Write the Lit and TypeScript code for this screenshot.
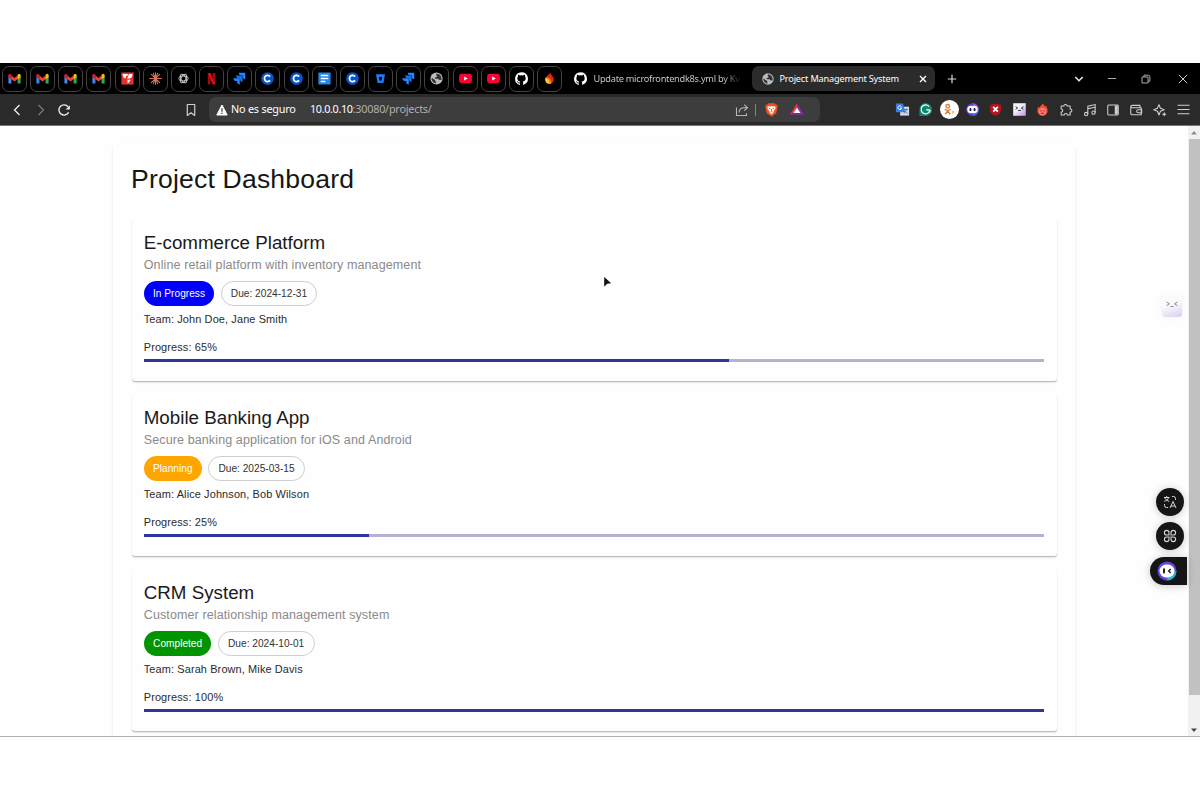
import { LitElement, html, css, svg, SVGTemplateResult } from "lit";
import { customElement, property } from "lit/decorators.js";

type Glyph = SVGTemplateResult;

const gmail: Glyph = svg`<path d="M1.500 4.500V13.200h3.200V7z" fill="#4285f4"/><path d="M11.300 7v6.200h3.200V4.500z" fill="#34a853"/><path d="M4.400 4.600L8 7.400l3.600-2.800V8.400L8 11.200 4.400 8.400z" fill="#ea4335"/><path d="M1.500 4.600a1.600 1.600 0 0 1 2.600-1.200l.6.500v5L1.500 6.700z" fill="#c5221f"/><path d="M11.300 3.900l.6-.5a1.600 1.600 0 0 1 2.600 1.200v2.100l-3.200 2.200z" fill="#fbbc04"/>`;
const flag: Glyph = svg`<rect x="1.500" y="1.500" width="13" height="13" fill="#e5322d"/><path d="M2.600 3.200h6L7.800 5.400H6.600l-.8 2.700C4 7.500 2.900 5.800 2.600 3.200zM9.600 3.200h3.800c-.2 2.500-1.300 4.300-3.300 4.900H7.600zM7.800 9.200h3.600L8.300 13.600z" fill="#fff"/>`;
const claude: Glyph = svg`<g stroke="#d9775a" stroke-width="1.100" stroke-linecap="round"><path d="M8 1.800v12.400M1.800 8h12.400M3.600 3.600l8.800 8.800M12.400 3.600l-8.800 8.800M5.600 2.300l4.800 11.400M10.400 2.300L5.600 13.700"/></g>`;
const gpt: Glyph = svg`<g fill="none" stroke="#c9c9c9" stroke-width="1"><ellipse cx="8" cy="8" rx="5" ry="2.600"/><ellipse cx="8" cy="8" rx="5" ry="2.600" transform="rotate(60 8 8)"/><ellipse cx="8" cy="8" rx="5" ry="2.600" transform="rotate(120 8 8)"/></g>`;
const netflix: Glyph = svg`<path d="M4 2h2.800v12L4 14.400zM9.200 2H12v12.400L9.200 14z" fill="#a8070f"/><path d="M4 2h2.800L12 14.400 9.200 14z" fill="#e50914"/>`;
const jira: Glyph = svg`<path d="M7.200 1.800h6.900v6.900c-1.700 0-2.800-1.200-2.800-2.800V4.600h-1.400c-1.500 0-2.700-1.200-2.700-2.800z" fill="#2684ff"/><path d="M4.300 4.800h6.900v6.900c-1.700 0-2.800-1.200-2.800-2.800V7.600H7c-1.500 0-2.700-1.200-2.700-2.800z" fill="#1272e6"/><path d="M1.400 7.800h6.900v6.700c-1.700 0-2.800-1.100-2.800-2.700v-1.200H4.100c-1.500 0-2.700-1.200-2.700-2.800z" fill="#2684ff"/>`;
const cMark: Glyph = svg`<circle cx="8" cy="8" r="6.800" fill="#0a53c4"/><path d="M10.700 6A3.300 3.300 0 1 0 10.700 10" fill="none" stroke="#fff" stroke-width="1.900"/>`;
const docs: Glyph = svg`<rect x="1.500" y="1.500" width="13" height="13" rx="1" fill="#2585e8"/><path d="M4 4.800h8M4 8h8M4 11.200h5" stroke="#fff" stroke-width="1.500"/>`;
const bucket: Glyph = svg`<path fill-rule="evenodd" d="M3.200 3.500h9.600l-1.600 9.200H4.800zM6.300 6.400l.5 3.600h2.400l.5-3.600z" fill="#1b7cf2"/>`;
const globe: Glyph = svg`<circle cx="8" cy="8" r="6.500" fill="#b9bdc2"/><path d="M8.500 2.600c-1 .8-1.400 1.600-.3 2.300 1.200.6 0 1.800-1.200 1.800s-1 1.500.2 1.500h2c1.200 0 1 1.400 2.200 1.400h1.700a5.400 5.400 0 0 0-4.600-7zM2.700 7.300c1.300.3 1.600 1.400 2.800 1.700 1.200.2.7 1.500 1.800 1.900v2.400a5.400 5.400 0 0 1-4.600-6z" fill="#303236"/>`;
const youtube: Glyph = svg`<rect x="1.200" y="3" width="13.600" height="10" rx="2.600" fill="#ff0033"/><path d="M6.500 5.800L10.400 8l-3.900 2.200z" fill="#fff"/>`;
const github: Glyph = svg`<path d="M8 1.2a7 7 0 0 0-2.2 13.6c.35.06.48-.15.48-.34v-1.3c-1.95.43-2.36-.83-2.36-.83-.32-.8-.78-1.03-.78-1.03-.64-.43.05-.42.05-.42.7.05 1.07.72 1.07.72.63 1.07 1.64.76 2.04.58.06-.45.25-.76.45-.94-1.56-.18-3.2-.78-3.2-3.46 0-.77.28-1.4.73-1.88-.07-.18-.32-.9.07-1.86 0 0 .59-.19 1.93.72a6.7 6.7 0 0 1 3.5 0c1.34-.9 1.92-.72 1.92-.72.39.97.15 1.68.07 1.86.45.49.72 1.11.72 1.88 0 2.7-1.64 3.28-3.2 3.46.25.21.47.64.47 1.3v1.92c0 .19.13.4.49.33A7 7 0 0 0 8 1.2z" fill="#fff"/>`;
const flame: Glyph = svg`<path d="M8.800 1.800c.8 2.600 3.800 4 3.800 7A4.700 4.700 0 0 1 8 13.800a4.700 4.700 0 0 1-4.700-4.900C3.300 6 7 4.500 8.800 1.800z" fill="#e2231a"/><path d="M3.600 7.300C6.500 7.500 8 10 8.600 13.700A4.800 4.800 0 0 1 3.600 7.300z" fill="#ffc928"/><path d="M6.500 6.800c2.500 1 3.700 3.500 3.400 6.500l-1.500.5C8.300 11 7 8.500 4.800 7.300z" fill="#f58220"/>`;

const translate: Glyph = svg`<rect x="5.500" y="5" width="9.500" height="9.500" fill="#d4dae2"/><path d="M9.500 8h4.500M12 7v1c0 2-1.200 3.300-2.500 4M10.500 9c.6 1.600 1.600 2.400 3 3" stroke="#5b6a7c" stroke-width=".9" fill="none"/><path d="M1 1.500h7.500l2.500 9.500H1z" fill="#347fe8"/><path d="M6.800 4.900a2 2 0 1 0 .3 1.600H5.300" fill="none" stroke="#fff"/>`;
const grammarly: Glyph = svg`<path d="M8 1a7 7 0 0 1 7 7 7 7 0 0 1-7 7H1.500V8A6.800 6.800 0 0 1 8 1z" fill="#11866f"/><path d="M11.700 4.900A4.700 4.700 0 1 0 12.700 8.500" fill="none" stroke="#fff" stroke-width="1.300"/><path d="M8.800 8.500h3.900M12.600 8.500v2.800" fill="none" stroke="#fff" stroke-width="1.300"/>`;
const people: Glyph = svg`<circle cx="8" cy="8" r="8" fill="#fff"/><g fill="none" stroke="#e27a22" stroke-width="1.100"><circle cx="6.500" cy="5.300" r="1.500"/><path d="M4 7.800c1.500 1.200 3.500 1.200 5 0M4.400 12l2.100-2.700 2.100 2.700"/></g><path d="M10 8.700l2.800 1.500L10 11.800z" fill="#f4c58a"/>`;
const bot: Glyph = svg`<circle cx="8" cy="8" r="6.800" fill="#5740d6"/><path d="M8 1.200A6.800 6.800 0 0 1 14.800 8h-3z" fill="#b04fe0"/><path d="M14.800 8A6.800 6.800 0 0 1 8 14.800L9 12z" fill="#3a6cf0"/><rect x="2.400" y="4" width="11.200" height="8" rx="4" fill="#fff"/><path d="M5.800 7.500v1.200M10.200 7.500v1.200" stroke="#15163a" stroke-width="2" stroke-linecap="round"/>`;
const shieldX: Glyph = svg`<path d="M8 1.500l6 1.800v4.700c0 3.400-2.400 5.400-6 6.700-3.600-1.300-6-3.300-6-6.700V3.300z" fill="#b7131f"/><path d="M5.500 5.300l5 5M10.500 5.300l-5 5" stroke="#fff" stroke-width="1.900"/>`;
const catFace: Glyph = svg`<defs><linearGradient id="cf" x1="0" y1="0" x2="1" y2="1"><stop offset=".4" stop-color="#f4f2fa"/><stop offset="1" stop-color="#b990e4"/></linearGradient></defs><rect x="1.300" y="1.300" width="13.400" height="13.400" fill="url(#cf)"/><path d="M3.800 5l2.200 1.400-2.200 1.400M12.200 5L10 6.400l2.200 1.400M6.500 9h3" stroke="#33333c" fill="none"/>`;
const fireFace: Glyph = svg`<path d="M8.500 1.200c.4 1.800 1.700 2.400 2.400 3.700l1-1.100c.2 1.800 1.600 3 1.600 5.500A5.500 5.500 0 0 1 8 14.800a5.500 5.500 0 0 1-5.500-5.500c0-2 .7-3 1-4.500l1.600 1.300C5.200 4 7.500 3 8.500 1.200z" fill="#f0532f"/><circle cx="8" cy="10.200" r="3.900" fill="#ff7d78"/><path d="M6.300 8.700v1.500M9.700 8.700v1.500M6.300 12h3.400" stroke="#8d1524" stroke-width="1"/>`;
const puzzle: Glyph = svg`<path d="M2.500 3.500h3.200c-.5-2.500 4-2.500 3.500 0h3.500v3.300c2.700-.5 2.700 4 0 3.500v3.400H9.500c.3-2.400-3.800-2.400-3.500 0H2.500v-3.400c2.300.3 2.300-3.800 0-3.500z" fill="none" stroke="#d0d0d0" stroke-width="1.200" stroke-linejoin="round"/>`;
const music: Glyph = svg`<g fill="none" stroke="#d0d0d0" stroke-width="1.200"><circle cx="3.600" cy="12.600" r="1.900"/><circle cx="12" cy="11" r="1.900"/><path d="M5.500 12.600V3.600l8.400-1.800V11M5.500 6.600l8.400-1.800"/></g>`;
const panel: Glyph = svg`<rect x="2" y="2.300" width="12" height="11.400" rx="1" fill="none" stroke="#d0d0d0" stroke-width="1.200"/><path d="M10 3h3.500v10H10z" fill="#d0d0d0"/>`;
const wallet: Glyph = svg`<g fill="none" stroke="#d0d0d0" stroke-width="1.200"><path d="M12.500 5V2.700H3.500a1.400 1.400 0 0 0 0 2.800h10.500v8H3.500A1.500 1.500 0 0 1 2 12V4"/><path d="M14.500 7.800h-4a1.700 1.700 0 0 0 0 3.400h4z"/></g>`;
const sparkle: Glyph = svg`<path d="M6.800 1.800L8.500 6l4.300 1.700-4.300 1.700-1.700 4.300-1.700-4.300L.8 7.700 5.100 6z" fill="none" stroke="#d0d0d0" stroke-width="1.200" stroke-linejoin="round"/><path d="M12.800 10l.8 2 2 .8-2 .8-.8 2-.8-2-2-.8 2-.8z" fill="#d0d0d0"/>`;
const menu: Glyph = svg`<path d="M1.600 3.400h12.800M1.600 8h12.800M1.600 12.600h12.800" stroke="#d0d0d0" stroke-width="1.100"/>`;

const icon = (g: Glyph, cls = "i15") => html`<svg class=${cls} viewBox="0 0 16 16">${g}</svg>`;

const pinned: Glyph[] = [
  gmail, gmail, gmail, gmail, flag, claude, gpt, netflix, jira, cMark,
  cMark, docs, cMark, bucket, jira, globe, youtube, youtube, github, flame,
];
const extensions: Glyph[] = [
  translate, grammarly, people, bot, shieldX, catFace, fireFace,
  puzzle, music, panel, wallet, sparkle, menu,
];

interface Project {
  name: string;
  description: string;
  status: string;
  tone: "blue" | "orange" | "green";
  due: string;
  team: string;
  progress: number;
}

const projects: Project[] = [
  { name: "E-commerce Platform", description: "Online retail platform with inventory management", status: "In Progress", tone: "blue", due: "2024-12-31", team: "John Doe, Jane Smith", progress: 65 },
  { name: "Mobile Banking App", description: "Secure banking application for iOS and Android", status: "Planning", tone: "orange", due: "2025-03-15", team: "Alice Johnson, Bob Wilson", progress: 25 },
  { name: "CRM System", description: "Customer relationship management system", status: "Completed", tone: "green", due: "2024-10-01", team: "Sarah Brown, Mike Davis", progress: 100 },
];

@customElement("browser-chrome")
export class BrowserChrome extends LitElement {
  static styles = css`
    :host { display: block; font-family: "Noto Sans", "Open Sans", sans-serif; color: #eee; }
    svg { display: block; flex: none; }
    .i14 { width: 14px; height: 14px; }
    .i15 { width: 15px; height: 15px; }
    .i18 { width: 19px; height: 19px; }
    .tabs { display: flex; align-items: center; height: 31px; background: #000; padding-left: 2px; box-sizing: border-box; }
    .pins { display: flex; gap: 3.160px; flex: none; }
    .pin { width: 25px; height: 26px; box-sizing: border-box; border: 1px solid #434343; border-radius: 7px; display: flex; align-items: center; justify-content: center; }
    .tab { display: flex; align-items: center; height: 25px; font-size: 9.200px; white-space: nowrap; box-sizing: border-box; }
    .idle { width: 178px; margin-left: 11.500px; gap: 5px; }
    .idle-text { width: 150px; color: #c4c4c4; letter-spacing: -.25px; -webkit-mask-image: linear-gradient(90deg, #000 87%, transparent 99%); mask-image: linear-gradient(90deg, #000 87%, transparent 99%); }
    .active { width: 183px; background: #2b2b2b; border-radius: 7px; padding: 0 7px 0 9px; gap: 4.500px; margin-left: .5px; }
    .active-text { flex: 1; color: #fff; letter-spacing: -.18px; }
    .plus { margin-left: 11px; }
    .controls { display: grid; grid-template-columns: 34px 31px 38px 35px; margin-left: auto; justify-items: center; align-items: center; }
    .bar { display: flex; align-items: center; height: 31px; background: #2a2a2a; padding: 0 5px 0 10px; box-sizing: border-box; }
    .nav { display: flex; width: 174px; gap: 9.500px; }
    .address { display: flex; align-items: center; margin-left: 10.500px; width: 611px; height: 25px; box-sizing: border-box; background: #3d3d3d; border-radius: 7px; padding: 0 16px 0 7px; white-space: nowrap; }
    .warn { width: 12px; height: 12px; margin-right: 3.500px; }
    .secure { font-size: 10.800px; line-height: 14px; width: 79px; color: #fff; letter-spacing: -.19px; margin-top: -1px; }
    .url { font-size: 10.800px; line-height: 14px; flex: 1; color: #b0b0b0; letter-spacing: -.21px; margin-top: -1px; }
    .host { color: #fff; letter-spacing: -.35px; }
    .sep { width: 1px; height: 12px; background: #858585; margin: 0 9px 0 6px; }
    .brave { margin-right: 12px; }
    .exts { display: grid; grid-template-columns: repeat(13, 23.430px); justify-items: center; align-items: center; margin-left: auto; }
    .line { height: 1px; background: #777; }
  `;

  render() {
    return html`
      <div class="tabs">
        <div class="pins">${pinned.map((p) => html`<div class="pin">${icon(p)}</div>`)}</div>
        <div class="tab idle">${icon(github)}<span class="idle-text">Update microfrontendk8s.yml by Kv</span></div>
        <div class="tab active">
          ${icon(globe, "i14")}<span class="active-text">Project Management System</span>
          <svg width="10" height="10" viewBox="0 0 10 10"><path d="M2 2l6 6M8 2l-6 6" stroke="#fff" stroke-width="1.400"/></svg>
        </div>
        <svg class="plus" width="12" height="12" viewBox="0 0 12 12"><path d="M6 1.800v8.400M1.800 6h8.400" stroke="#ddd" stroke-width="1.200"/></svg>
        <div class="controls">
          <svg width="10" height="10" viewBox="0 0 10 10"><path d="M1.300 3L5 6.700 8.700 3" fill="none" stroke="#eee" stroke-width="1.500"/></svg>
          <svg width="10" height="10" viewBox="0 0 10 10"><path d="M.8 4.500h8.400" stroke="#aaa"/></svg>
          <svg width="10" height="10" viewBox="0 0 10 10"><path d="M1 3h6v6H1zM3 3V1.200h4.200a1.700 1.700 0 0 1 1.700 1.700v4.300H7" fill="none" stroke="#aaa"/></svg>
          <svg width="10" height="10" viewBox="0 0 10 10"><path d="M.8.800l8.400 8.400M9.200.800L.8 9.200" stroke="#ccc"/></svg>
        </div>
      </div>
      <div class="bar">
        <div class="nav">
          <svg width="14" height="14" viewBox="0 0 14 14"><path d="M9.500 2L4.500 7l5 5" fill="none" stroke="#eee" stroke-width="1.300"/></svg>
          <svg width="14" height="14" viewBox="0 0 14 14"><path d="M4.500 2l5 5-5 5" fill="none" stroke="#777" stroke-width="1.300"/></svg>
          <svg width="14" height="14" viewBox="0 0 14 14"><path d="M11.600 9.200A5.100 5.100 0 1 1 11 3.800" fill="none" stroke="#eee" stroke-width="1.400"/><path d="M12.900 2.300v4.200H8.700z" fill="#eee"/></svg>
        </div>
        <svg width="14" height="14" viewBox="0 0 14 14"><path d="M3.300 1.500h7.400v11L7 9.800l-3.700 2.700z" fill="none" stroke="#ccc" stroke-width="1.200" stroke-linejoin="round"/></svg>
        <div class="address">
          <svg class="warn" viewBox="0 0 12 12"><path d="M6 1l5.200 10H.8z" fill="#fff" stroke="#fff" stroke-linejoin="round"/><path d="M6 4.200v3.600M6 8.700v1.300" stroke="#333" stroke-width="1.200"/></svg>
          <span class="secure">No es seguro</span>
          <span class="url"><span class="host">10.0.0.10</span>:30080/projects/</span>
          <svg width="14" height="14" viewBox="0 0 14 14"><path d="M1.500 4.500v8h10v-2.300M4 9.500C4.300 6.500 6 4.700 9 4.700h3M9.300 1.700l3.200 3-3.200 3" fill="none" stroke="#b7b7b7" stroke-width="1.100"/></svg>
          <span class="sep"></span>
          <svg class="brave" width="13" height="14" viewBox="0 0 13 14"><path d="M3.500.3h6l1 1.300 1.700.2.500 2.200-1.500 6.200-4.700 3.500-4.700-3.500L.3 4l.5-2.200 1.700-.2z" fill="#f4511e"/><path d="M3 3.200l2.200.4L6.500 3l1.300.6 2.200-.4.700 1.800-2 3.200L8.200 10l-1.700 1.200L4.800 10l-.5-1.800-2-3.200z" fill="#fff"/><path d="M4 5.200l1.500.6M9 5.200l-1.500.6M6.500 6v2.200M5.400 8.800h2.200" stroke="#f4511e" stroke-width=".9"/></svg>
          <svg width="14" height="13" viewBox="0 0 14 13"><path d="M7 .500L0 12l7-4z" fill="#f23c3c"/><path d="M7 .500L14 12 7 8z" fill="#8a2bb0"/><path d="M0 12h14L7 7z" fill="#7b2a94"/><path d="M7 4.800L3.500 10h7z" fill="#fff"/></svg>
        </div>
        <div class="exts">${extensions.map((e, i) => icon(e, i === 2 ? "i18" : i > 6 && i < 12 ? "i14" : "i15"))}</div>
      </div>
      <div class="line"></div>
    `;
  }
}

@customElement("project-card")
export class ProjectCard extends LitElement {
  @property({ attribute: false }) project!: Project;

  static styles = css`
    :host { display: block; box-sizing: border-box; height: 162.500px; padding: 12px 12.500px 0 12.250px; border-radius: 3px; background: #fefefe; color: #212121;
      box-shadow: 0 1px 1px rgba(0,0,0,.22), 0 2px 2px -.5px rgba(0,0,0,.08); }
    .name { font-size: 18.750px; line-height: 25px; color: #1a1a1a; }
    .desc { margin-top: .6px; font-size: 12.500px; line-height: 18.750px; letter-spacing: .118px; color: #8a8a8a; }
    .chips { display: flex; gap: 6.250px; margin-top: 6.250px; }
    .chip { height: 25px; line-height: 25px; border-radius: 13px; padding: 0 9.300px; font-size: 10.160px; box-sizing: border-box; white-space: nowrap; }
    .blue { background: #0000fa; color: #fff; }
    .orange { background: #ffa500; color: #fff; }
    .green { background: #009400; color: #fff; }
    .due { border: 1px solid #cfcfcf; line-height: 23px; color: #333; }
    .line { font-size: 10.940px; line-height: 15.600px; letter-spacing: .117px; color: #2b2b2b; }
    .team { margin-top: 6.250px; }
    .progress { margin-top: 12.500px; }
    .track { margin-top: 3.100px; height: 3.100px; background: #b5b1d0; }
    .fill { height: 100%; background: #2f359c; }
  `;

  render() {
    const p = this.project;
    return html`
      <div class="name">${p.name}</div>
      <div class="desc">${p.description}</div>
      <div class="chips"><span class="chip ${p.tone}">${p.status}</span><span class="chip due">Due: ${p.due}</span></div>
      <div class="line team">Team: ${p.team}</div>
      <div class="line progress">Progress: ${p.progress}%</div>
      <div class="track"><div class="fill" style="width:${p.progress}%"></div></div>
    `;
  }
}

@customElement("app-root")
export class AppRoot extends LitElement {
  static styles = css`
    :host { display: block; width: 1200px; height: 800px; box-sizing: border-box; padding-top: 63px; background: #fff; overflow: hidden; font-family: "Liberation Sans", Arial, sans-serif; }
    .view { display: flex; position: relative; height: 610px; background: #fefefe; border-bottom: 1px solid #b0b0b0; overflow: hidden; }
    .page { flex: 1; display: flex; justify-content: center; padding: 18px .500px 0 0; overflow: hidden; }
    .paper { width: 962.500px; height: 640px; flex: none; box-sizing: border-box; padding: 18.500px 18.500px 18.500px 19px; border-radius: 3px; box-shadow: 0 2px 3px rgba(0,0,0,.1); }
    .title { margin: 0 0 0 -.5px; font-weight: 400; font-size: 26.560px; line-height: 33px; letter-spacing: .195px; color: #161616; }
    .list { display: flex; flex-direction: column; gap: 12.500px; margin-top: 22.500px; }
    .scroll { width: 12px; background: #f1f1f1; display: flex; flex-direction: column; align-items: center; }
    .up { height: 13px; }
    .thumb { width: 11px; height: 556px; background: #c1c1c1; }
    .down { margin-top: auto; height: 13px; }
    .cursor { position: absolute; left: 603px; top: 150px; }
    .face { position: absolute; left: 1162px; top: 171px; width: 20px; height: 20px; border-radius: 3px; background: linear-gradient(160deg, #faf9fc 40%, #dcccf0); box-shadow: 0 0 8px rgba(0,0,0,.05); }
    .dock { position: absolute; right: 12.800px; top: 362px; display: flex; flex-direction: column; align-items: flex-end; gap: 6.400px; }
    .round { width: 28px; height: 28px; margin-right: 3px; border-radius: 50%; background: #151515; display: flex; align-items: center; justify-content: center; box-shadow: 0 1px 9px rgba(0,0,0,.22); }
    .pill { width: 37px; height: 28px; border-radius: 14px 0 0 14px; box-sizing: border-box; padding-left: 6.500px; background: #151515; display: flex; align-items: center; box-shadow: 0 1px 9px rgba(0,0,0,.22); }
  `;

  render() {
    return html`
      <browser-chrome></browser-chrome>
      <div class="view">
        <div class="page">
          <div class="paper">
            <h1 class="title">Project Dashboard</h1>
            <div class="list">${projects.map((p) => html`<project-card .project=${p}></project-card>`)}</div>
          </div>
        </div>
        <div class="scroll">
          <svg class="up" width="12" viewBox="0 0 12 13"><path d="M6 5L9 8.500H3z" fill="#8b8b8b"/></svg>
          <div class="thumb"></div>
          <svg class="down" width="12" viewBox="0 0 12 13"><path d="M6 9L3 5.500h6z" fill="#444"/></svg>
        </div>
        <svg class="cursor" width="10" height="13" viewBox="0 0 10 13"><path d="M1.200 1l7 6.200-4 .6-3 3z" fill="#111"/></svg>
        <svg class="face" viewBox="0 0 20 20"><path d="M4.500 5l3 1.800-3 1.800M15.500 5l-3 1.800 3 1.800M8.500 9.500h3" fill="none" stroke="#8b8992" stroke-width="1"/></svg>
        <div class="dock">
          <div class="round"><svg width="14" height="14" viewBox="0 0 14 14"><g fill="none" stroke="#d5d5d5" stroke-width="1"><path d="M1 2.500h5.500M3.700 1v1.500M5.600 2.500C5 4.500 3.500 5.700 1.300 6.300M1.800 3c.8 1.800 2.400 2.800 4.500 3.300M9 1.500h1.500a2 2 0 0 1 2 2V5M1.500 9v1.500a2 2 0 0 0 2 2H5M7 13l3-6.500L13 13M8 11h4"/></g></svg></div>
          <div class="round"><svg width="14" height="14" viewBox="0 0 14 14"><g fill="none" stroke="#d5d5d5" stroke-width="1.100"><path d="M6 6H3.700A2.300 2.300 0 1 1 6 3.700zM8 6V3.700A2.300 2.300 0 1 1 10.300 6zM6 8v2.300A2.300 2.300 0 1 1 3.700 8zM8 8h2.300A2.300 2.300 0 1 1 8 10.300z"/></g></svg></div>
          <div class="pill"><svg width="20" height="20" viewBox="0 0 20 20"><circle cx="10" cy="10" r="9.500" fill="#6445dc"/><path d="M19.500 10A9.500 9.500 0 0 1 10 19.500l1-5z" fill="#1fb6dc"/><rect x="2.500" y="3.500" width="15" height="13" rx="6.500" fill="#fff"/><path d="M7 8.300v3.200" stroke="#222" stroke-width="2" stroke-linecap="round"/><path d="M13.700 8l-2 2 2 2" fill="none" stroke="#222" stroke-width="1.500"/></svg></div>
        </div>
      </div>
    `;
  }
}
